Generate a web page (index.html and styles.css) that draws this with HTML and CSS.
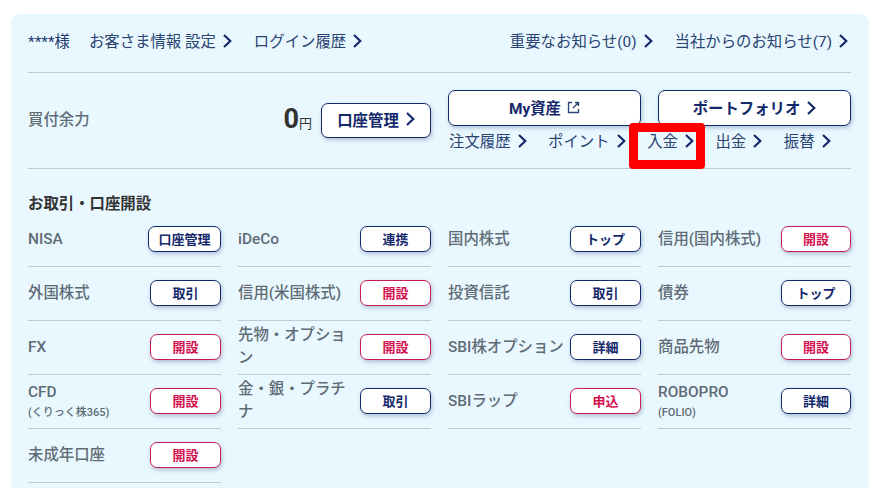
FILE: index.html
```html
<!DOCTYPE html>
<html lang="ja">
<head>
<meta charset="utf-8">
<title>口座</title>
<link rel="stylesheet" href="styles.css">
</head>
<body>
<svg class="defs" width="0" height="0"><symbol id="chev" viewBox="0 0 9 14"><path d="M1 1l6.300 6L1 13" fill="none" stroke="currentColor" stroke-width="2.200"/></symbol></svg>
<main class="card">
  <div class="top">
    <div class="top-group">
      <span class="user">****様</span>
      <a class="link">お客さま情報 設定<svg class="chev"><use href="#chev"/></svg></a>
      <a class="link">ログイン履歴<svg class="chev"><use href="#chev"/></svg></a>
    </div>
    <div class="top-group">
      <a class="link">重要なお知らせ(0)<svg class="chev"><use href="#chev"/></svg></a>
      <a class="link">当社からのお知らせ(7)<svg class="chev"><use href="#chev"/></svg></a>
    </div>
  </div>
  <div class="summary">
    <div class="power">
      <span class="power-label">買付余力</span>
      <span class="amount"><b>0</b><small>円</small></span>
      <a class="big-btn manage">口座管理<svg class="chev"><use href="#chev"/></svg></a>
    </div>
    <div class="actions">
      <div class="wide">
        <a class="big-btn">My資産<svg class="ext" viewBox="0 0 13 13"><path d="M5 1.500H1.500v10h10V8M8 1.500h3.500V5M11.500 1.500 6 7" fill="none" stroke="currentColor" stroke-width="1.300"/></svg></a>
        <a class="big-btn">ポートフォリオ<svg class="chev"><use href="#chev"/></svg></a>
      </div>
      <div class="sublinks">
        <a class="link">注文履歴<svg class="chev"><use href="#chev"/></svg></a>
        <a class="link">ポイント<svg class="chev"><use href="#chev"/></svg></a>
        <a class="link">入金<svg class="chev"><use href="#chev"/></svg></a>
        <a class="link">出金<svg class="chev"><use href="#chev"/></svg></a>
        <a class="link">振替<svg class="chev"><use href="#chev"/></svg></a>
      </div>
    </div>
  </div>
  <h2 class="title">お取引・口座開設</h2>
  <div class="grid">
    <div class="row"><span class="name">NISA</span><a class="btn wider">口座管理</a></div>
    <div class="row"><span class="name">iDeCo</span><a class="btn">連携</a></div>
    <div class="row"><span class="name">国内株式</span><a class="btn">トップ</a></div>
    <div class="row"><span class="name">信用(国内株式)</span><a class="btn red">開設</a></div>
    <div class="row"><span class="name">外国株式</span><a class="btn">取引</a></div>
    <div class="row"><span class="name">信用(米国株式)</span><a class="btn red">開設</a></div>
    <div class="row"><span class="name">投資信託</span><a class="btn">取引</a></div>
    <div class="row"><span class="name">債券</span><a class="btn">トップ</a></div>
    <div class="row"><span class="name">FX</span><a class="btn red">開設</a></div>
    <div class="row"><span class="name">先物・オプション</span><a class="btn red">開設</a></div>
    <div class="row"><span class="name nowrap">SBI株オプション</span><a class="btn">詳細</a></div>
    <div class="row"><span class="name">商品先物</span><a class="btn red">開設</a></div>
    <div class="row"><span class="name">CFD<small>(くりっく株365)</small></span><a class="btn red">開設</a></div>
    <div class="row"><span class="name">金・銀・プラチナ</span><a class="btn">取引</a></div>
    <div class="row"><span class="name">SBIラップ</span><a class="btn red">申込</a></div>
    <div class="row"><span class="name">ROBOPRO<small>(FOLIO)</small></span><a class="btn">詳細</a></div>
    <div class="row"><span class="name">未成年口座</span><a class="btn red">開設</a></div>
  </div>
  <div class="highlight"></div>
</main>
</body>
</html>
```
FILE: styles.css
```css
* { box-sizing: border-box; }
html, body { margin: 0; height: 488px; overflow: hidden; background: #fff; }
body {
  padding: 14px 11px 0;
  font-family: Roboto, "Noto Sans CJK JP", sans-serif;
  font-size: 15.400px;
  color: #5f6b75;
}
.defs { position: absolute; }
.card {
  position: relative;
  height: 474px;
  padding: 0 18px 0 17px;
  background: #e9f8ff;
  border-radius: 9px 9px 0 0;
}
.top {
  display: flex;
  justify-content: space-between;
  align-items: center;
  height: 59px;
  padding: 0 3px 7px 0;
  border-bottom: 1px solid #bccbd9;
}
.top-group { display: flex; align-items: center; gap: 22px; }
.user { color: #1f3a6e; margin-right: -3px; }
.link {
  display: flex;
  align-items: center;
  color: #2a4472;
  white-space: nowrap;
}
.chev { width: 9px; height: 14px; margin: 2px 0 0 7px; color: #14296b; flex: none; }
.summary {
  display: grid;
  grid-template-columns: 403px 403px;
  gap: 17px;
  height: 96px;
  border-bottom: 1px solid #bccbd9;
}
.power { display: flex; align-items: center; }
.power-label { font-weight: 500; margin-bottom: 5px; }
.amount { margin-left: auto; margin-right: 9px; display: flex; align-items: baseline; color: #333; margin-bottom: 3px; }
.amount b { font-size: 27px; font-weight: 700; line-height: 1; }
.amount small { font-size: 13px; }
.big-btn, .btn {
  display: flex;
  align-items: center;
  justify-content: center;
  background: #fff;
  border: 1px solid #14296b;
  border-radius: 7px;
  color: #14296b;
  font-weight: 700;
  box-shadow: 1px 2px 4px rgba(40, 60, 110, .3);
  white-space: nowrap;
}
.big-btn { height: 36px; padding-bottom: 2px; }
.big-btn .chev { margin-top: 1px; }
.manage { width: 110px; height: 35px; padding-bottom: 4px; }
.actions { padding-top: 17px; }
.wide { display: grid; grid-template-columns: 193px 193px; gap: 17px; }
.ext { width: 13px; height: 13px; margin-left: 6px; color: #2a4472; }
.sublinks { display: flex; gap: 21.500px; padding: 3px 0 0 1px; }
.title {
  margin: 26px 0 0;
  height: 18px;
  font-size: 15.400px;
  line-height: 19px;
  font-weight: 700;
  color: #333;
}
.grid {
  display: grid;
  grid-template-columns: repeat(4, 193px);
  grid-auto-rows: 54px;
  column-gap: 17px;
}
.row {
  display: flex;
  align-items: center;
  justify-content: space-between;
  border-bottom: 1px solid #bccbd9;
  padding-bottom: 1px;
}
.name {
  width: 113px;
  font-weight: 500;
  line-height: 23px;
  color: #5f6b75;
}
.nowrap { white-space: nowrap; }
.name small {
  display: block;
  font-size: 11px;
  line-height: 17px;
}
.btn {
  width: 71px;
  height: 26px;
  padding-bottom: 1px;
  font-size: 13px;
  flex: none;
}
.wider { width: 73px; }
.row:nth-child(4n) .btn { width: 70px; }
.red { color: #d3114f; border-color: #c81e56; }
.highlight {
  position: absolute;
  left: 618px;
  top: 109px;
  width: 76px;
  height: 46px;
  border: 9px solid #f00;
  border-radius: 4px;
}
```
